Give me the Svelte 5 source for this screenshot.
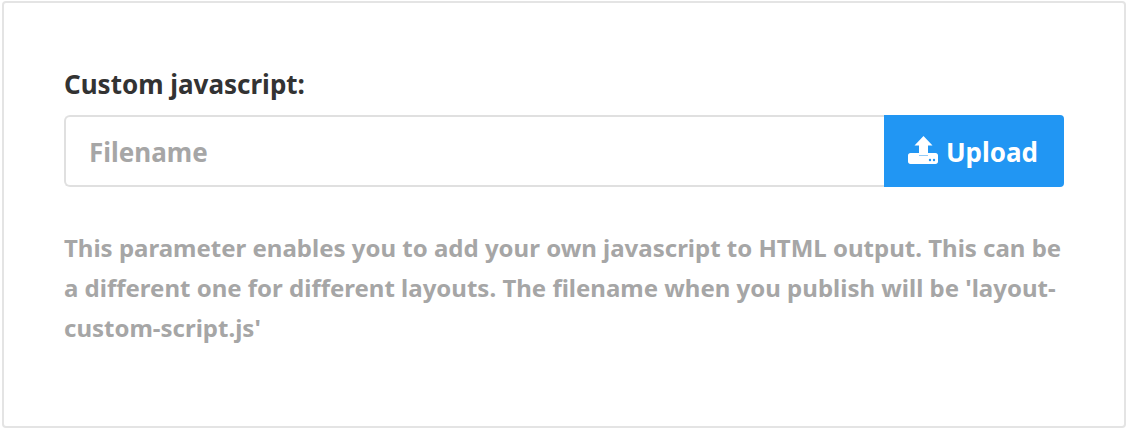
<script>
	const helpText =
		"This parameter enables you to add your own javascript to HTML output. This can be a different one for different layouts. The filename when you publish will be 'layout-custom-script.js'";
</script>

<div class="panel">
	<label class="title" for="filename">Custom javascript:</label>
	<div class="upload-row">
		<input id="filename" type="text" placeholder="Filename" />
		<button type="button">
			<svg width="30" height="28" viewBox="0 0 30 28" fill="#fff" aria-hidden="true">
				<path d="M15.500 0 6.500 9.500H11V19h9V9.500h4.500z" />
				<path d="M0 19.500C0 18 1 17 2.500 17H11v2.500h9V17h7.500c1.500 0 2.500 1 2.500 2.500v6c0 1.500-1 2.500-2.500 2.500h-25C1 28 0 27 0 25.500z" />
				<circle cx="22" cy="24" r="1.200" fill="#2196f3" />
				<circle cx="26" cy="24" r="1.200" fill="#2196f3" />
			</svg>
			Upload
		</button>
	</div>
	<p class="help">{helpText}</p>
</div>

<style>
	:global(body) {
		margin: 0;
		background: #fff;
	}

	.panel {
		box-sizing: border-box;
		width: 1124px;
		height: 427px;
		margin: 1px 2px 0;
		padding: 67px 60px 0;
		border: 2px solid #e4e4e4;
		border-radius: 4px;
		font-family: "Noto Sans", "Open Sans", sans-serif;
	}

	.title {
		display: block;
		color: #333;
		font-size: 26px;
		font-weight: 700;
		line-height: 29px;
	}

	.upload-row {
		display: flex;
		width: 1000px;
		height: 72px;
		margin-top: 16px;
	}

	input {
		flex: 1;
		box-sizing: border-box;
		min-width: 0;
		padding: 1px 23px 0;
		border: 2px solid #e0e0e0;
		border-right: 0;
		border-radius: 6px 0 0 6px;
		outline: none;
		color: #333;
		font: 700 26px "Noto Sans", sans-serif;
	}

	input::placeholder {
		color: #a6a6a6;
		opacity: 1;
	}

	button {
		display: flex;
		align-items: center;
		justify-content: center;
		gap: 8px;
		width: 180px;
		padding: 1px 2px 0 0;
		border: 0;
		border-radius: 0 4px 4px 0;
		background: #2196f3;
		color: #fff;
		font: 700 26px "Noto Sans", sans-serif;
	}

	button svg {
		margin-top: -3px;
	}

	.help {
		margin: 41px 0 0;
		color: #a6a6a6;
		font-size: 24px;
		font-weight: 700;
		line-height: 40px;
	}
</style>
